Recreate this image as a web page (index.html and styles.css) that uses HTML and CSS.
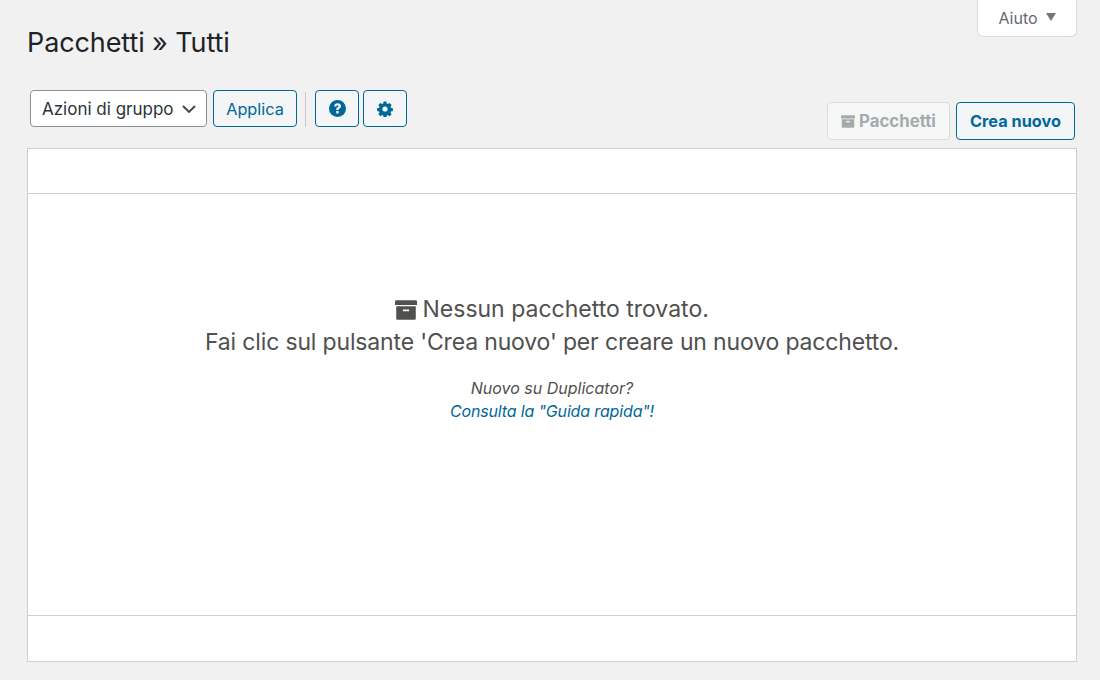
FILE: index.html
```html
<!DOCTYPE html>
<html lang="it">
<head>
<meta charset="utf-8">
<title>Pacchetti » Tutti</title>
<link rel="stylesheet" href="styles.css">
</head>
<body>
<div class="wrap">
  <div class="help-row"><button class="help-tab">Aiuto <span class="caret"></span></button></div>
  <h1 class="title">Pacchetti » Tutti</h1>
  <div class="toolbar">
    <div class="left-tools">
      <div class="select"><span>Azioni di gruppo</span>
        <svg class="chev" width="14" height="8" viewBox="0 0 14 8"><path d="M1 1l6 6 6-6" fill="none" stroke="#3c434a" stroke-width="1.8"/></svg>
      </div>
      <button class="btn apply">Applica</button>
      <span class="sep"></span>
      <button class="btn icon-btn" aria-label="Aiuto">
        <svg width="17" height="17" viewBox="0 0 16 16"><circle cx="8" cy="8" r="8" fill="#006799"/><path d="M4.900 6C5 4.200 6.300 3.100 8.100 3.100c1.900 0 3.200 1.100 3.200 2.600 0 1.100-.6 1.700-1.400 2.200-.7.400-.9.700-.9 1.300v.2H6.800v-.4c0-1 .4-1.600 1.100-2 .7-.4 1-.7 1-1.200 0-.5-.4-.8-.9-.8-.6 0-1 .4-1.100 1zM6.800 10.300h2.300v2.300H6.800z" fill="#f3f5f6"/></svg>
      </button>
      <button class="btn icon-btn" aria-label="Impostazioni">
        <svg width="16" height="16" viewBox="0 0 16 16"><path fill-rule="evenodd" fill="#006799" d="M6.600.5h2.800l.4 2 1 .5 1.800-1 2 2-1.100 1.700.4 1 2 .5v2.800l-2 .4-.4 1 1.100 1.800-2 2-1.800-1.100-1 .4-.4 2H6.600l-.4-2-1-.4-1.800 1.100-2-2 1.100-1.800-.4-1-2-.4V7.200l2-.5.4-1-1.100-1.700 2-2 1.800 1 1-.5zM8 5.400a2.600 2.600 0 100 5.200 2.600 2.600 0 000-5.200z"/></svg>
      </button>
    </div>
    <div class="right-tools">
      <button class="btn strong disabled">
        <svg width="14" height="13" viewBox="0 0 18 16"><path fill="#a7aaad" d="M0 1a1 1 0 011-1h16a1 1 0 011 1v3H0zM1 5h16v10a1 1 0 01-1 1H2a1 1 0 01-1-1zm5.500 2.500v1.500h5V7.500z" fill-rule="evenodd"/></svg>
        Pacchetti</button>
      <button class="btn strong create">Crea nuovo</button>
    </div>
  </div>
  <div class="panel">
    <div class="band"></div>
    <div class="empty">
      <div class="empty-main">
        <svg class="box" width="22" height="20" viewBox="0 0 18 16"><path fill="#50504f" fill-rule="evenodd" d="M0 1a1 1 0 011-1h16a1 1 0 011 1v3H0zM1 5h16v10a1 1 0 01-1 1H2a1 1 0 01-1-1zm5.500 2.500v1.500h5V7.500z"/></svg>
        <span class="lead">Nessun pacchetto trovato.</span><br>
        Fai clic sul pulsante 'Crea nuovo' per creare un nuovo pacchetto.
      </div>
      <div class="empty-sub">
        <i>Nuovo su Duplicator?</i><br>
        <a class="guide" href="#">Consulta la "Guida rapida"!</a>
      </div>
    </div>
    <div class="band last"></div>
  </div>
</div>
</body>
</html>
```
FILE: styles.css
```css
* { box-sizing: border-box; }
html, body { margin: 0; padding: 0; }
body {
  background: #f1f1f1;
  color: #3c434a;
  font-family: Inter, "Liberation Sans", sans-serif;
  height: 680px;
  overflow: hidden;
}
.wrap { width: 1100px; padding: 0 23px 0 27px; }
.help-row { display: flex; justify-content: flex-end; height: 0; }
.help-tab {
  width: 100px; height: 37px; padding: 0;
  background: #fff; border: 1px solid #dcdcde; border-top: 0;
  border-radius: 0 0 6px 6px; color: #646970;
  font: 16px Inter, "Liberation Sans", sans-serif;
  display: flex; align-items: center; justify-content: center; gap: 8px;
}
.caret {
  width: 0; height: 0;
  border-left: 5px solid transparent; border-right: 5px solid transparent;
  border-top: 8px solid #72777c; margin-bottom: 2px;
}
.title {
  margin: 0; padding-top: 25px; height: 90px;
  font-size: 27px; line-height: 36px; font-weight: 400; color: #1d2327;
  letter-spacing: -0.1px;
}
.toolbar { display: flex; justify-content: space-between; height: 58px; padding: 0 2px 0 3px; }
.left-tools { display: flex; align-items: flex-start; }
.right-tools { display: flex; gap: 6px; padding-top: 12px; }
.select {
  width: 177px; height: 37px; background: #fff;
  border: 1px solid #8c8f94; border-radius: 4px;
  display: flex; align-items: center; justify-content: space-between;
  padding: 0 10px 0 11px; font-size: 17px; color: #2c3338;
}
.btn {
  height: 37px; background: #f3f5f6; color: #006799;
  border: 1px solid #006799; border-radius: 4px;
  font: 16px Inter, "Liberation Sans", sans-serif;
  display: flex; align-items: center; justify-content: center; padding: 0;
}
.apply { width: 84px; margin-left: 6px; font-size: 16.3px; }
.sep { width: 1px; height: 35px; margin: 2px 9px 0 8px; background: #c8c8c8; }
.icon-btn { width: 44px; margin-right: 4px; }
.strong { font-weight: 700; height: 38px; font-size: 16.3px; }
.disabled { width: 123px; gap: 4px; color: #a7aaad; border-color: #dcdcde; background: #f6f7f7; font-size: 16.8px; }
.create { width: 119px; }
.panel {
  height: 514px; background: #fff; border: 1px solid #ccd0d4;
  display: flex; flex-direction: column;
}
.band { height: 45px; border-bottom: 1px solid #ccd0d4; }
.band.last { height: 46px; border-bottom: 0; border-top: 1px solid #ccd0d4; }
.empty { flex: 1; text-align: center; padding-top: 99px; color: #50504f; }
.empty-main { font-size: 23px; line-height: 33px; letter-spacing: -0.16px; }
.lead { letter-spacing: 0; }
.box { vertical-align: -3px; margin-right: -1px; }
.empty-sub { margin-top: 18px; font-size: 16px; line-height: 23px; }
.guide { color: #006799; text-decoration: none; font-style: italic; letter-spacing: -0.15px; }
```
